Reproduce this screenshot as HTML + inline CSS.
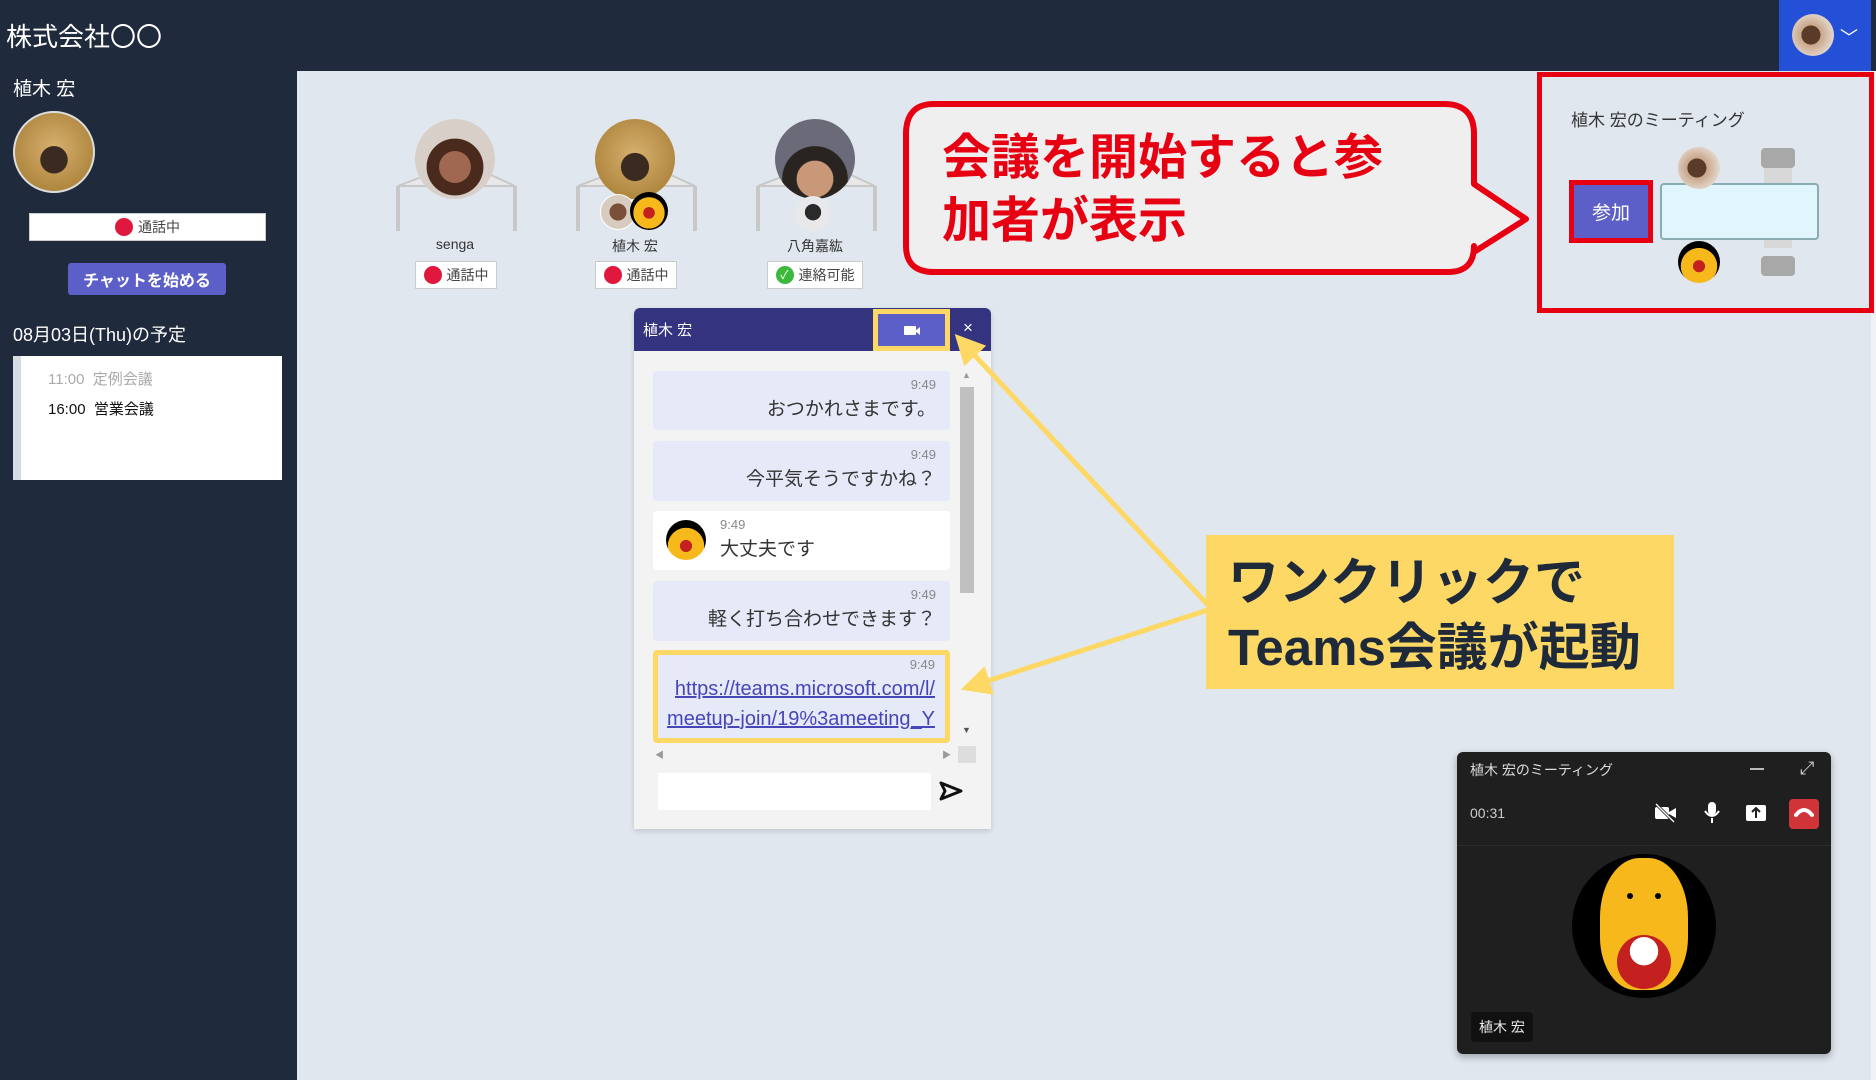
<!DOCTYPE html>
<html><head><meta charset="utf-8">
<style>
*{margin:0;padding:0;box-sizing:border-box}
body{width:1876px;height:1080px;overflow:hidden;background:#e1e7ef;font-family:"Liberation Sans","Noto Sans CJK JP",sans-serif;position:relative}
.a{position:absolute}
.top{left:0;top:0;width:1876px;height:71px;background:#1f2a3d}
.side{left:0;top:71px;width:297px;height:1009px;background:#1f2a3d}
.av{border-radius:50%;overflow:hidden}
.face{background:radial-gradient(circle at 50% 60%,#3a2a20 0 22%,transparent 23%),radial-gradient(circle at 50% 45%,#d8b070 0,#b08840 70%)}
.pill{background:#fff;border:1px solid #ccc;font-size:14px;color:#444;display:flex;align-items:center;justify-content:center;gap:5px}
.dot{width:18px;height:18px;border-radius:50%;background:#e0183e}
.bub{left:653px;width:297px;background:#e6e9f8;border-radius:4px;text-align:right;padding:6px 14px 0 0;color:#333;font-size:19px}
.bub .t{font-size:13px;color:#888;margin-bottom:2px}
</style></head><body>
<div class="a top"></div>
<div class="a" style="left:6px;top:17px;color:#fff;font-size:26px">株式会社〇〇</div>
<div class="a" style="left:1779px;top:0;width:92px;height:71px;background:#2350d6"></div>
<div class="a av" style="left:1792px;top:14px;width:42px;height:42px;background:radial-gradient(circle at 45% 50%,#5a3a28 0 30%,#c9a58a 31%,#e8e0d8 80%)"></div>
<div class="a" style="left:1840px;top:24px;color:#fff;font-size:18px">﹀</div>
<div class="a side"></div>
<div class="a" style="left:1871px;top:71px;width:5px;height:1009px;background:#f0f2f5"></div>

<div class="a" style="left:13px;top:74px;color:#fff;font-size:19px">植木 宏</div>
<div class="a av face" style="left:13px;top:111px;width:82px;height:82px;border:2px solid #ddd"></div>
<div class="a pill" style="left:29px;top:213px;width:237px;height:28px"><span class="dot"></span>通話中</div>
<div class="a" style="left:68px;top:263px;width:158px;height:32px;background:#5b5fc7;border-radius:3px;color:#fff;font-weight:bold;font-size:16px;display:flex;align-items:center;justify-content:center">チャットを始める</div>
<div class="a" style="left:13px;top:321px;color:#fff;font-size:18px">08月03日(Thu)の予定</div>
<div class="a" style="left:13px;top:356px;width:269px;height:124px;background:#fff;border-left:8px solid #d8dde4"></div>
<div class="a" style="left:48px;top:368px;color:#aaa;font-size:15px">11:00&nbsp; 定例会議</div>
<div class="a" style="left:48px;top:398px;color:#111;font-size:15px">16:00&nbsp; 営業会議</div>

<svg class="a" style="left:380px;top:170px" width="520" height="80">
<g fill="#e8e8e8" stroke="#c8c8c8" stroke-width="2">
<path d="M18 16 L60 0 L100 0 L135 16 Z"/><path d="M198 16 L240 0 L280 0 L315 16 Z"/><path d="M378 16 L420 0 L460 0 L495 16 Z"/>
</g>
<g stroke="#c8c8c8" stroke-width="4"><path d="M18 16v45M135 16v45M198 16v45M315 16v45M378 16v45M495 16v45"/></g>
</svg>
<div class="a av" style="left:415px;top:119px;width:80px;height:80px;background:radial-gradient(circle at 50% 60%,#a06850 0 25%,#4a2a1c 26% 45%,#d8d0c8 46%)"></div>
<div class="a av face" style="left:595px;top:119px;width:80px;height:80px"></div>
<div class="a av" style="left:775px;top:119px;width:80px;height:80px;background:radial-gradient(circle at 50% 75%,#c89878 0 25%,#2a2420 26% 45%,#6a6a78 46%)"></div>
<div class="a av" style="left:600px;top:194px;width:36px;height:36px;background:radial-gradient(circle,#7a5038 0 35%,#d8ccc0 36%);border:1px solid #fff"></div>
<div class="a av" style="left:630px;top:192px;width:38px;height:38px;background:radial-gradient(circle at 50% 55%,#c42020 0 20%,#f6b81a 21% 55%,#000 56%)"></div>
<div class="a av" style="left:795px;top:196px;width:36px;height:36px;background:radial-gradient(circle at 50% 45%,#2a2a2a 0 30%,#e8e8ea 31%)"></div>
<div class="a" style="left:415px;top:236px;width:80px;text-align:center;font-size:14px;color:#333">senga</div>
<div class="a" style="left:595px;top:236px;width:80px;text-align:center;font-size:14px;color:#333">植木 宏</div>
<div class="a" style="left:775px;top:236px;width:80px;text-align:center;font-size:14px;color:#333">八角嘉紘</div>
<div class="a pill" style="left:415px;top:261px;width:82px;height:28px"><span class="dot"></span>通話中</div>
<div class="a pill" style="left:595px;top:261px;width:82px;height:28px"><span class="dot"></span>通話中</div>
<div class="a pill" style="left:767px;top:261px;width:96px;height:28px"><span class="dot" style="background:#3cb83c;color:#fff;font-size:12px;text-align:center;line-height:18px">✓</span>連絡可能</div>

<div class="a" style="left:634px;top:308px;width:357px;height:521px;background:#f3f3f3;border-radius:6px 6px 0 0;box-shadow:0 2px 6px rgba(0,0,0,.15)"></div>
<div class="a" style="left:634px;top:308px;width:357px;height:43px;background:#33337f;border-radius:6px 6px 0 0"></div>
<div class="a" style="left:643px;top:319px;color:#fff;font-size:15px">植木 宏</div>
<div class="a" style="left:873px;top:309px;width:77px;height:42px;background:#5b5fc7;border:5px solid #fdd865"></div>
<div class="a" style="left:904px;top:326px;width:12px;height:9px;background:#fff;border-radius:1px"></div>
<div class="a" style="left:915px;top:327px;width:0;height:0;border-top:4px solid transparent;border-bottom:4px solid transparent;border-right:5px solid #fff"></div>
<div class="a" style="left:963px;top:318px;color:#fff;font-size:17px">×</div>
<div class="a bub" style="top:371px;height:59px"><div class="t">9:49</div>おつかれさまです。</div>
<div class="a bub" style="top:441px;height:60px"><div class="t">9:49</div>今平気そうですかね？</div>
<div class="a bub" style="top:511px;height:59px;background:#fff;text-align:left;padding-left:67px"><div class="t">9:49</div>大丈夫です</div>
<div class="a av" style="left:666px;top:520px;width:40px;height:40px;background:radial-gradient(circle at 50% 65%,#c42020 0 18%,#f6b81a 19% 55%,#000 56%)"></div>
<div class="a bub" style="top:581px;height:60px"><div class="t">9:49</div>軽く打ち合わせできます？</div>
<div class="a bub" style="top:650px;height:93px;border:5px solid #fdd865;padding-top:2px;padding-right:10px"><div class="t">9:49</div><div style="color:#4646b8;text-decoration:underline;font-size:20px;line-height:30px;white-space:nowrap">https://teams.microsoft.com/l/<br>meetup-join/19%3ameeting_Y</div></div>
<div class="a" style="left:960px;top:387px;width:14px;height:206px;background:#c0c0c0"></div>
<div class="a" style="left:962px;top:370px;font-size:9px;color:#999">▲</div>
<div class="a" style="left:962px;top:725px;font-size:9px;color:#555">▼</div>
<div class="a" style="left:655px;top:748px;font-size:9px;color:#999">◀</div>
<div class="a" style="left:942px;top:748px;font-size:9px;color:#999">▶</div>
<div class="a" style="left:958px;top:746px;width:18px;height:17px;background:#ddd"></div>
<div class="a" style="left:658px;top:773px;width:273px;height:37px;background:#fff"></div>
<svg class="a" style="left:938px;top:780px" width="26" height="22"><path d="M3 3 L23 11 L3 19 L7 11 Z" fill="none" stroke="#111" stroke-width="3" stroke-linejoin="round"/></svg>

<svg class="a" style="left:900px;top:100px" width="640" height="180">
<path d="M34 4 H544 Q574 4 574 34 V84 L626 119 L574 152 V146 Q574 172 548 172 H34 Q6 172 6 146 V34 Q6 4 34 4 Z" fill="#efefef" stroke="#e60012" stroke-width="6" stroke-linejoin="round"/>
</svg>
<div class="a" style="left:942px;top:127px;color:#e60012;font-weight:bold;font-size:49px;line-height:63px">会議を開始すると参<br>加者が表示</div>

<div class="a" style="left:1537px;top:72px;width:337px;height:241px;border:5px solid #e60012"></div>
<div class="a" style="left:1571px;top:106px;font-size:17px;color:#333">植木 宏のミーティング</div>
<div class="a" style="left:1761px;top:148px;width:34px;height:20px;background:#a8a8a8;border-radius:4px"></div>
<div class="a" style="left:1764px;top:168px;width:28px;height:80px;background:#d8d8d8"></div>
<div class="a" style="left:1761px;top:256px;width:34px;height:20px;background:#a8a8a8;border-radius:4px"></div>
<div class="a" style="left:1660px;top:183px;width:159px;height:57px;background:#e0f6fc;border:2px solid #8aacb4;border-radius:4px"></div>
<div class="a av" style="left:1678px;top:147px;width:42px;height:42px;background:radial-gradient(circle at 45% 50%,#5a3a28 0 30%,#c9a58a 31%,#e8e0d8 80%)"></div>
<div class="a av" style="left:1678px;top:241px;width:42px;height:42px;background:radial-gradient(circle at 50% 60%,#c42020 0 18%,#f6b81a 19% 55%,#000 56%)"></div>
<div class="a" style="left:1569px;top:180px;width:84px;height:63px;border:5px solid #e60012;background:#5b5fc7;color:#fff;font-size:19px;display:flex;align-items:center;justify-content:center">参加</div>

<svg class="a" style="left:0;top:0" width="1876" height="1080">
<defs><marker id="m" markerWidth="6" markerHeight="6" refX="3" refY="3" orient="auto" markerUnits="strokeWidth"><path d="M0 0 L6 3 L0 6 Z" fill="#fdd865"/></marker></defs>
<line x1="1208" y1="605" x2="965" y2="345" stroke="#fdd865" stroke-width="5" marker-end="url(#m)"/>
<line x1="1208" y1="610" x2="975" y2="685" stroke="#fdd865" stroke-width="5" marker-end="url(#m)"/>
</svg>
<div class="a" style="left:1206px;top:535px;width:468px;height:154px;background:#fdd865"></div>
<div class="a" style="left:1228px;top:550px;color:#1e2a3a;font-weight:bold;font-size:51px;line-height:65px">ワンクリックで<br>Teams会議が起動</div>

<div class="a" style="left:1457px;top:752px;width:374px;height:302px;background:#1f1f1f;border-radius:6px;box-shadow:0 3px 8px rgba(0,0,0,.3)"></div>
<div class="a" style="left:1470px;top:760px;color:#ddd;font-size:14px">植木 宏のミーティング</div>
<div class="a" style="left:1750px;top:768px;width:14px;height:2px;background:#bbb"></div>
<div class="a" style="left:1800px;top:758px;color:#ccc;font-size:18px">⤢</div>
<div class="a" style="left:1470px;top:805px;color:#ccc;font-size:14px">00:31</div>
<svg class="a" style="left:1654px;top:803px" width="24" height="20"><rect x="1" y="4" width="14" height="12" rx="2" fill="#fff"/><path d="M15 9 L22 5 V15 L15 11Z" fill="#fff"/><line x1="2" y1="1" x2="20" y2="19" stroke="#1f1f1f" stroke-width="3"/><line x1="2" y1="1" x2="20" y2="19" stroke="#fff" stroke-width="1.3"/></svg>
<svg class="a" style="left:1703px;top:801px" width="18" height="24"><rect x="5" y="1" width="8" height="13" rx="4" fill="#fff"/><path d="M2 10 Q9 20 16 10 M9 17 V22" stroke="#fff" stroke-width="2" fill="none"/></svg>
<svg class="a" style="left:1745px;top:804px" width="22" height="18"><rect x="1" y="1" width="20" height="16" rx="2" fill="#fff"/><path d="M11 14 V5 M7 8 L11 4 L15 8" stroke="#1f1f1f" stroke-width="2" fill="none"/></svg>
<div class="a" style="left:1789px;top:799px;width:30px;height:30px;background:#d13438;border-radius:4px"></div>
<svg class="a" style="left:1794px;top:807px" width="20" height="12"><path d="M2 8 Q10 -2 18 8" stroke="#fff" stroke-width="4" fill="none" stroke-linecap="round"/></svg>
<div class="a" style="left:1457px;top:845px;width:374px;height:1px;background:#2c2c2c"></div>
<div class="a av" style="left:1572px;top:854px;width:144px;height:144px;background:#000"></div>
<div class="a" style="left:1600px;top:858px;width:88px;height:132px;background:#f6b81a;border-radius:45% 45% 40% 40%"></div>
<div class="a av" style="left:1617px;top:935px;width:54px;height:54px;background:radial-gradient(circle at 50% 30%,#fff 0 30%,#c42020 31%)"></div>
<div class="a" style="left:1627px;top:893px;width:6px;height:6px;background:#000;border-radius:50%"></div>
<div class="a" style="left:1655px;top:893px;width:6px;height:6px;background:#000;border-radius:50%"></div>
<div class="a" style="left:1471px;top:1012px;width:62px;height:30px;background:#111;border-radius:4px;color:#eee;font-size:14px;display:flex;align-items:center;justify-content:center">植木 宏</div>
</body></html>
